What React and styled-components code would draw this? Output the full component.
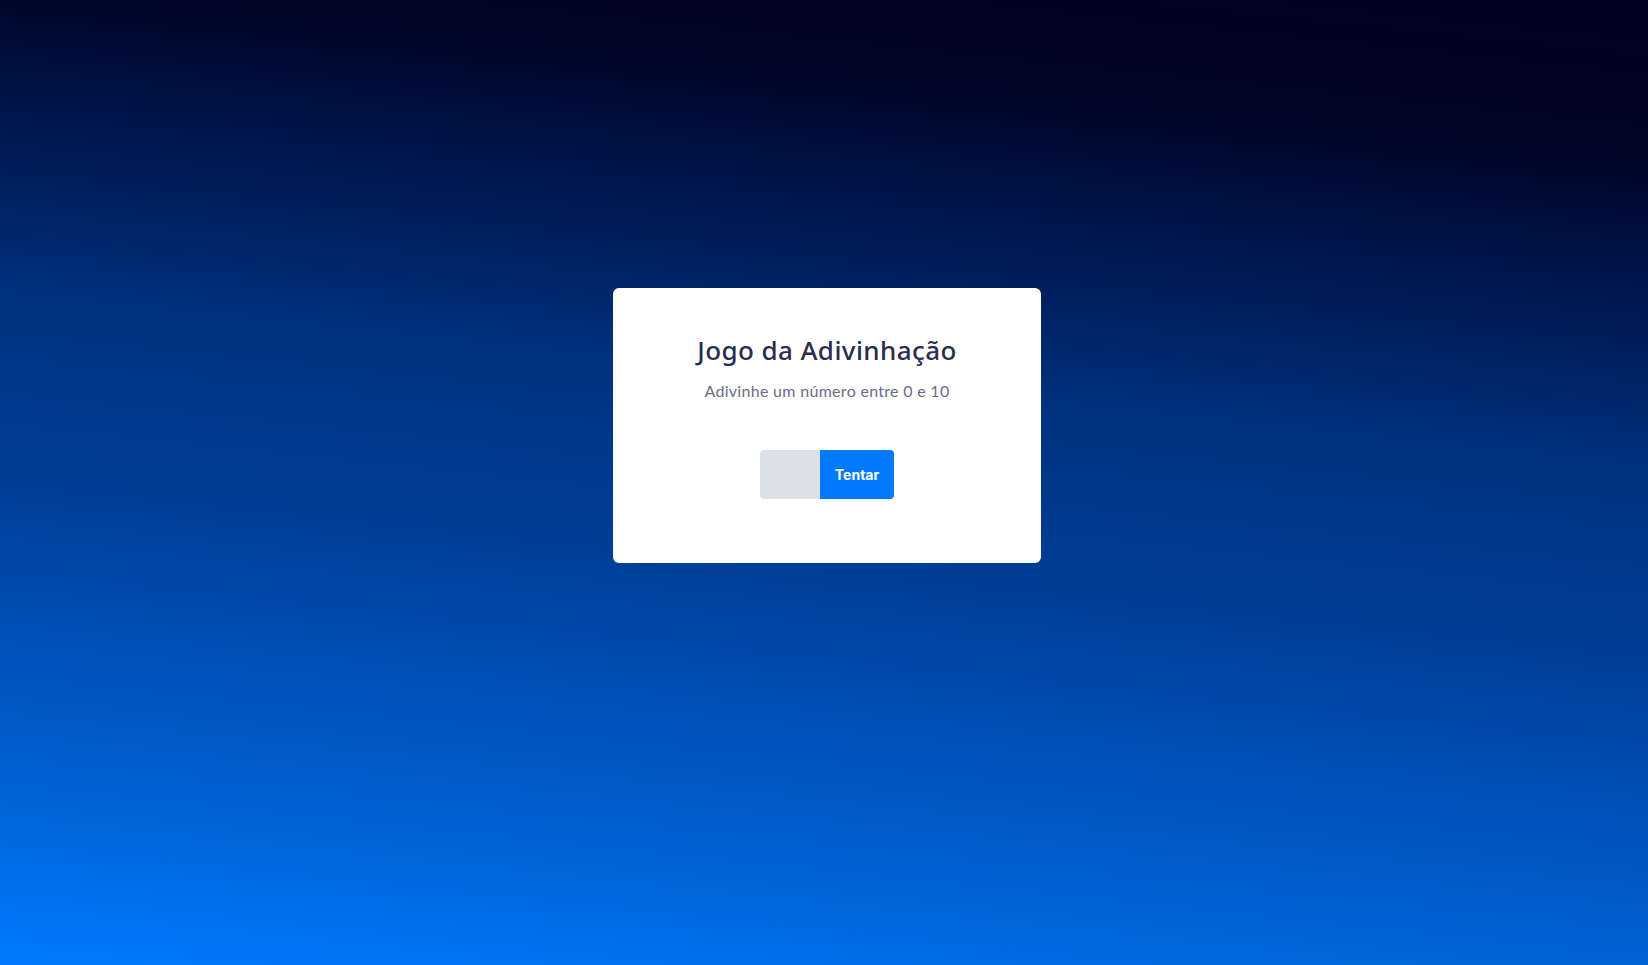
import React, { useState } from 'react';
import styled, { createGlobalStyle } from 'styled-components';

const GlobalStyle = createGlobalStyle`
  * { box-sizing: border-box; }
  html, body, #root { margin: 0; height: 100%; }
  body {
    font-family: Inter, "Noto Sans", sans-serif;
  }
`;

const Page = styled.div`
  min-height: 100vh;
  display: flex;
  align-items: center;
  justify-content: center;
  padding: 0 0 114px 6px;
  background: linear-gradient(
    6deg,
    #007bff 0%,
    #0063d6 15%,
    #003f99 42%,
    #003380 58%,
    #001a55 72%,
    #000528 86%,
    #02001f 100%
  );
`;

const Card = styled.div`
  width: 428px;
  height: 275px;
  background: #ffffff;
  border-radius: 6px;
  display: flex;
  flex-direction: column;
  align-items: center;
  padding-top: 44px;
`;

const Title = styled.h1`
  margin: 0;
  font-family: "Noto Sans", sans-serif;
  font-size: 26px;
  font-weight: 500;
  letter-spacing: 0.4px;
  color: #2b2d4e;
`;

const Subtitle = styled.p`
  margin: 13px 0 0;
  font-family: Lato, "Noto Sans", sans-serif;
  font-size: 16px;
  letter-spacing: 0.3px;
  color: #6c6c8a;
`;

const Form = styled.form`
  display: flex;
  margin-top: 50px;
  height: 49px;
  border-radius: 4px;
  overflow: hidden;
`;

const Input = styled.input`
  width: 60px;
  border: none;
  outline: none;
  background: #dce1e8;
  font-size: 16px;
  text-align: center;
  color: #2b2d4e;
`;

const Button = styled.button`
  width: 74px;
  border: none;
  background: #007bff;
  color: #ffffff;
  font-family: Inter, sans-serif;
  font-weight: 700;
  font-size: 14px;
  cursor: pointer;
`;

export default function App() {
  const [guess, setGuess] = useState('');

  return (
    <>
      <GlobalStyle />
      <Page>
        <Card>
          <Title>Jogo da Adivinhação</Title>
          <Subtitle>Adivinhe um número entre 0 e 10</Subtitle>
          <Form onSubmit={(e) => e.preventDefault()}>
            <Input value={guess} onChange={(e) => setGuess(e.target.value)} />
            <Button type="submit">Tentar</Button>
          </Form>
        </Card>
      </Page>
    </>
  );
}
